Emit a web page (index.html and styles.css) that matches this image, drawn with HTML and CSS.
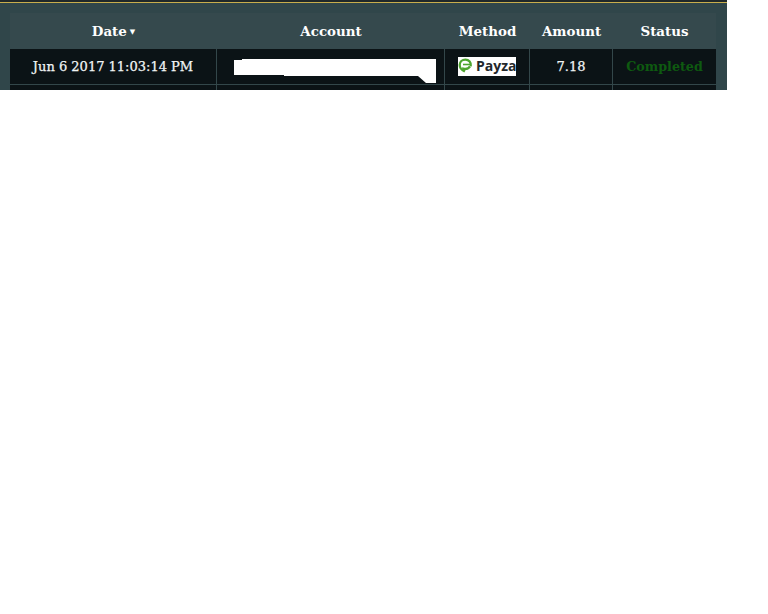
FILE: index.html
```html
<!DOCTYPE html>
<html lang="en">
<head>
<meta charset="utf-8">
<title>Transactions</title>
<link rel="stylesheet" href="styles.css">
</head>
<body>
<section class="panel">
  <div class="rule"></div>
  <div class="grid">
    <div class="cell head">Date <span class="sort">▼</span></div>
    <div class="cell head">Account</div>
    <div class="cell head">Method</div>
    <div class="cell head">Amount</div>
    <div class="cell head">Status</div>

    <div class="cell body">Jun 6 2017 11:03:14 PM</div>
    <div class="cell body">
      <svg class="redact" width="202" height="24" viewBox="0 0 202 24" aria-hidden="true"><path d="M0 1H8V0H202V24H192L184 17H50V16H0Z" fill="#fff"/></svg>
    </div>
    <div class="cell body">
      <div class="payza">
        <svg class="payza-mark" width="15" height="15" viewBox="0 0 15 15" aria-hidden="true"><path d="M12.800 8.300C13.500 4.500 10.800 1.600 7.400 1.600 4.200 1.600 1.700 4 1.700 7c0 3 2.300 5.300 5 6.300-.8-.9-1.200-1.600-1.300-2.700 3 .6 5.500-.4 6.600-2.300" fill="none" stroke="#4ea52f" stroke-width="2.300"/><path d="M5 6.500h7.500" stroke="#4ea52f" stroke-width="1.600"/></svg>
        <span class="payza-text">Payza</span>
      </div>
    </div>
    <div class="cell body">7.18</div>
    <div class="cell body done">Completed</div>

    <div class="cell body"></div>
    <div class="cell body"></div>
    <div class="cell body"></div>
    <div class="cell body"></div>
    <div class="cell body"></div>
  </div>
</section>
</body>
</html>
```
FILE: styles.css
```css
html, body {
  margin: 0;
  background: #fff;
}
.panel {
  width: 727px;
  height: 90px;
  overflow: hidden;
  background: #30464a;
}
.rule {
  height: 1px;
  border-top: 2px solid #20282a;
  background: #c8ae4c;
}
.grid {
  display: grid;
  grid-template-columns: 207px 228px 85px 83px 103px;
  grid-template-rows: 36px 36px 36px;
  margin: 10px 11px 0 10px;
  font-family: "DejaVu Serif", serif;
  font-size: 13px;
  color: #f1f5f5;
}
.cell {
  display: flex;
  align-items: center;
  justify-content: center;
  box-sizing: border-box;
  white-space: nowrap;
}
.head {
  background: #35494d;
  color: #fff;
  font-size: 13.400px;
  font-weight: 700;
}
.sort {
  font-size: 7px;
  margin-left: 3px;
}
.body {
  background: #0b1316;
  border-bottom: 1px solid #33474a;
  border-right: 1px solid #33474a;
  -webkit-text-stroke: 0.25px currentColor;
}
.body:nth-child(5n) {
  border-right: 0;
}
.done {
  color: #0e5a10;
  font-size: 12.700px;
  font-weight: 700;
  -webkit-text-stroke: 0;
}
.redact {
  display: block;
  margin-top: 9px;
  margin-left: 9px;
}
.payza {
  display: flex;
  align-items: center;
  overflow: hidden;
  width: 58px;
  height: 19px;
  background: #fff;
}
.payza-mark {
  flex: none;
  margin-bottom: 2px;
}
.payza-text {
  margin: 0 0 2px 3px;
  font-family: "Open Sans", sans-serif;
  font-size: 14px;
  font-weight: 700;
  color: #24282b;
  -webkit-text-stroke: 0;
}
```
